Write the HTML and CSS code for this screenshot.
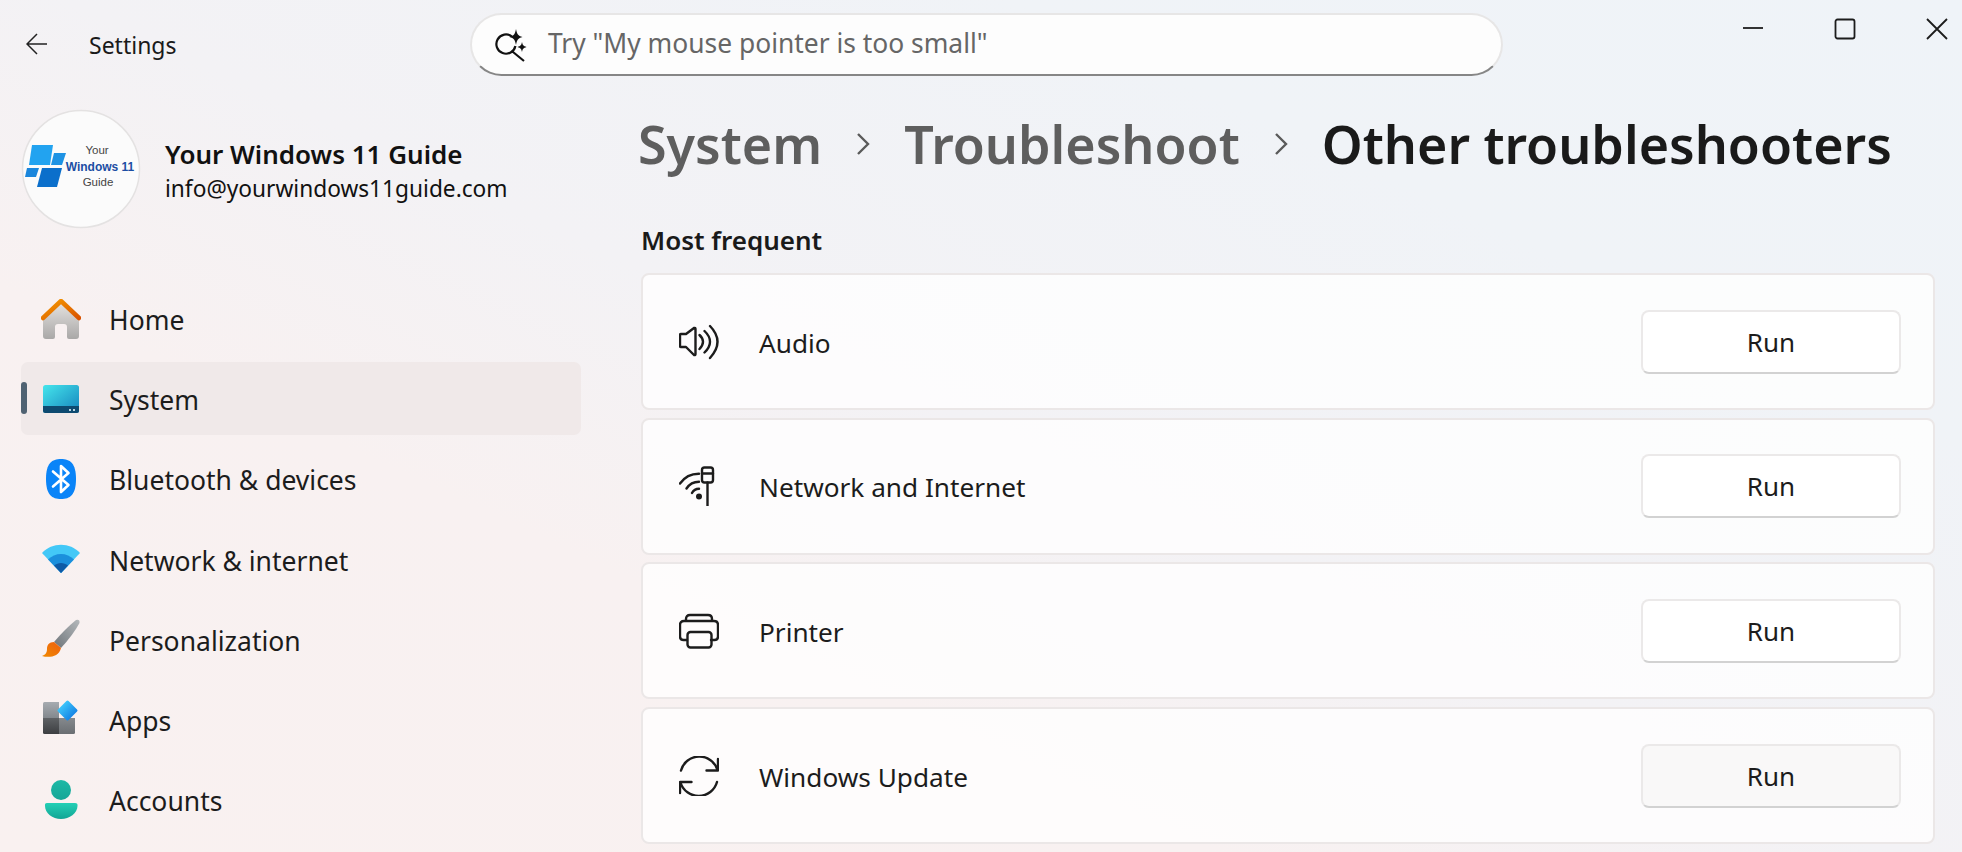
FILE: index.html
```html
<!DOCTYPE html>
<html lang="en">
<head>
<meta charset="utf-8">
<title>Settings</title>
<link rel="stylesheet" href="styles.css">
</head>
<body>
<div class="app">
  <header class="titlebar">
    <svg class="back" viewBox="0 0 22 22"><path d="M21 11H1M11 1 1 11l10 10"/></svg>
    <span class="app-title">Settings</span>
    <div class="search">
      <svg class="search-icon" viewBox="0 0 34 34">
        <path class="ln" d="M19 8.600A9.600 9.600 0 1 0 22.400 18M20 24l11 9"/>
        <path class="st" d="M23 1c1 5 2 7 6.500 8-4.500 1-5.500 3-6.500 8-1-5-2-7-6.500-8 4.500-1 5.500-3 6.500-8zM29 14c.7 3 1.300 4 4.500 5-3.200 1-3.800 2-4.500 5-.7-3-1.300-4-4.500-5 3.200-1 3.800-2 4.500-5z"/>
      </svg>
      <span class="search-text">Try "My mouse pointer is too small"</span>
    </div>
    <div class="controls">
      <svg class="ctl" viewBox="0 0 22 22"><path d="M1 10h20"/></svg>
      <svg class="ctl" viewBox="0 0 22 22"><rect x="1.500" y="1.500" width="19" height="19" rx="2"/></svg>
      <svg class="ctl" viewBox="0 0 22 22"><path d="M1 1l20 20M21 1 1 21"/></svg>
    </div>
  </header>
  <div class="content">
    <aside class="sidebar">
      <div class="profile">
        <svg class="avatar" viewBox="21 109 120 120">
          <circle cx="81" cy="169" r="58.500" fill="#fbfbfb" stroke="#e4e2e2" stroke-width="1.500"/>
          <polygon fill="#22a3f0" points="32,145 53,145 50,165 29,165"/>
          <polygon fill="#1e93e4" points="54,153 66,153 62,165 51,165"/>
          <polygon fill="#1a86dc" points="27,168 39,168 36,177 25,177"/>
          <polygon fill="#0b6fcb" points="42,168 62,168 57,187 37,187"/>
          <text class="av-text" x="97" y="154" text-anchor="middle">Your</text>
          <text class="av-brand" x="100" y="171" text-anchor="middle">Windows 11</text>
          <text class="av-text" x="98" y="186" text-anchor="middle">Guide</text>
        </svg>
        <div class="who">
          <div class="who-name">Your Windows 11 Guide</div>
          <div class="who-mail">info@yourwindows11guide.com</div>
        </div>
      </div>
      <nav class="nav">
        <a class="nav-item">
          <svg class="nav-icon" viewBox="0 0 40 40">
            <defs>
              <linearGradient id="hb" x1="0" y1="0" x2="0" y2="1"><stop offset="0" stop-color="#e6e3e1"/><stop offset="1" stop-color="#a9a8a7"/></linearGradient>
              <linearGradient id="hr" x1="0" y1="0" x2="1" y2="1"><stop offset="0" stop-color="#f59a00"/><stop offset="1" stop-color="#d95300"/></linearGradient>
            </defs>
            <path fill="url(#hb)" d="M20 3 38 20V37q0 3-3 3H28a2 2 0 0 1-2-2V28q0-3-3-3H17q-3 0-3 3V38a2 2 0 0 1-2 2H5q-3 0-3-3V20z"/>
            <path fill="none" stroke="url(#hr)" stroke-width="4.500" stroke-linecap="round" stroke-linejoin="round" d="M2 19 20 2 38 19"/>
          </svg>
          <span>Home</span>
        </a>
        <a class="nav-item is-active">
          <svg class="nav-icon" viewBox="0 0 40 40">
            <defs><linearGradient id="sy" x1="0" y1="0" x2="1" y2="1"><stop offset="0" stop-color="#45e6ec"/><stop offset="1" stop-color="#1583bd"/></linearGradient></defs>
            <rect x="2" y="6" width="36" height="28" rx="2.500" fill="url(#sy)"/>
            <path fill="#0d4a70" d="M2 27h36v4.500q0 2.500-2.500 2.500h-31Q2 34 2 31.500z"/>
            <rect x="28" y="30" width="2" height="2" fill="#b8d4e2"/><rect x="32" y="30" width="2" height="2" fill="#b8d4e2"/>
          </svg>
          <span>System</span>
        </a>
        <a class="nav-item">
          <svg class="nav-icon" viewBox="0 0 40 40">
            <path fill="#0a84f8" d="M20 0C29 0 35 4 35 20S29 40 20 40 5 36 5 20 11 0 20 0z"/>
            <path fill="none" stroke="#fff" stroke-width="2.600" stroke-linecap="round" stroke-linejoin="round" d="M12 12.500 27.500 26 20 33V7l7.500 7L12 27.500"/>
          </svg>
          <span>Bluetooth &amp; devices</span>
        </a>
        <a class="nav-item">
          <svg class="nav-icon" viewBox="0 0 40 40">
            <path fill="#43c8f7" d="M1 14C11 3 29 3 39 14L20 34z"/>
            <path fill="#1b8fdc" d="M7 20.500C14 13 26 13 33 20.500L20 34z"/>
            <path fill="#0e5aa6" d="M13 26.500C17 23 23 23 27 26.500L20 34z"/>
          </svg>
          <span>Network &amp; internet</span>
        </a>
        <a class="nav-item">
          <svg class="nav-icon" viewBox="0 0 40 40">
            <defs>
              <linearGradient id="bh" x1="0" y1="1" x2="1" y2="0"><stop offset="0" stop-color="#6e7479"/><stop offset="1" stop-color="#b4b8bb"/></linearGradient>
              <linearGradient id="bo" x1="0" y1="1" x2="1" y2="0"><stop offset="0" stop-color="#f08a00"/><stop offset="1" stop-color="#ee5f10"/></linearGradient>
            </defs>
            <path fill="url(#bh)" d="M35 1q4-1 3.500 3Q32 16 20 29l-7-6Q24 10 35 1z"/>
            <path fill="url(#bo)" d="M13 23c-5 0-7 3-7 7 0 4-2 6-5 7 7 2 17 1 19-8z"/>
          </svg>
          <span>Personalization</span>
        </a>
        <a class="nav-item">
          <svg class="nav-icon" viewBox="0 0 40 40">
            <defs>
              <linearGradient id="a1" x1="0" y1="0" x2="0" y2="1"><stop offset="0" stop-color="#a6abb0"/><stop offset="1" stop-color="#83888d"/></linearGradient>
              <linearGradient id="a2" x1="0" y1="0" x2="0" y2="1"><stop offset="0" stop-color="#5f6265"/><stop offset="1" stop-color="#3c3e41"/></linearGradient>
              <linearGradient id="a3" x1="0" y1="0" x2="0" y2="1"><stop offset="0" stop-color="#85898d"/><stop offset="1" stop-color="#6a6e72"/></linearGradient>
              <linearGradient id="a4" x1="0" y1="0" x2="1" y2="0"><stop offset="0" stop-color="#3cc4fa"/><stop offset="1" stop-color="#1786e6"/></linearGradient>
            </defs>
            <path fill="url(#a1)" d="M3.500 3H18v16H2V4.500Q2 3 3.500 3z"/>
            <path fill="url(#a2)" d="M2 19h16v16H3.500Q2 35 2 33.500z"/>
            <path fill="url(#a3)" d="M18 19h16v14.500q0 1.500-1.500 1.500H18z"/>
            <rect x="19" y="4" width="15" height="15" rx="1.500" transform="rotate(45 26.500 11.500)" fill="url(#a4)"/>
          </svg>
          <span>Apps</span>
        </a>
        <a class="nav-item">
          <svg class="nav-icon" viewBox="0 0 40 40">
            <defs>
              <linearGradient id="u1" x1="0" y1="0" x2="0" y2="1"><stop offset="0" stop-color="#1db9a6"/><stop offset="1" stop-color="#16a697"/></linearGradient>
              <linearGradient id="u2" x1="0" y1="0" x2="0" y2="1"><stop offset="0" stop-color="#24d0b6"/><stop offset="1" stop-color="#12a594"/></linearGradient>
            </defs>
            <circle cx="20" cy="10" r="10" fill="url(#u1)"/>
            <path fill="url(#u2)" d="M6 23h28q3 0 2.500 3c0 7-8 13-16.500 13S4 33 4 26q-.5-3 2-3z"/>
          </svg>
          <span>Accounts</span>
        </a>
      </nav>
    </aside>
    <main class="main">
      <h1 class="crumbs">
        <span class="crumb">System</span>
        <svg class="chev" viewBox="0 0 14 24"><path d="M2 2l10 10L2 22"/></svg>
        <span class="crumb">Troubleshoot</span>
        <svg class="chev" viewBox="0 0 14 24"><path d="M2 2l10 10L2 22"/></svg>
        <span class="crumb-now">Other troubleshooters</span>
      </h1>
      <h2 class="section">Most frequent</h2>
      <section class="list">
        <div class="row">
          <svg class="row-icon" viewBox="0 0 40 40"><path d="M2 12H7L15 6Q16.500 5.500 16.500 7V32Q16.500 33.500 15 33L7 25H2Q1 25 1 24V13Q1 12 2 12zM20.500 13Q27.500 19.500 20.500 27M25.500 9Q36.500 19.500 25.500 30.500M31 4Q46 19.500 31 36"/></svg>
          <span class="row-label">Audio</span>
          <button class="run">Run</button>
        </div>
        <div class="row">
          <svg class="row-icon" viewBox="0 0 40 40"><path d="M1 17.500A23 23 0 0 1 20 7.700M7.500 22.500A15 15 0 0 1 20 15.700M13 27A8 8 0 0 1 20 22.700"/><circle class="dot" cx="20" cy="30.500" r="3"/><rect x="23" y="1.500" width="11" height="15" rx="2.500"/><path d="M23 7.500h11M28.500 16.500V40"/></svg>
          <span class="row-label">Network and Internet</span>
          <button class="run">Run</button>
        </div>
        <div class="row">
          <svg class="row-icon" viewBox="0 0 40 40"><path d="M8 29H4.500Q1 29 1 25.500V14Q1 10 5 10H35Q39 10 39 14V25.500Q39 29 35.500 29H32M7 10V8Q7 4 11 4H29Q33 4 33 8V10"/><rect x="8.500" y="21" width="24" height="15.500" rx="3"/></svg>
          <span class="row-label">Printer</span>
          <button class="run">Run</button>
        </div>
        <div class="row">
          <svg class="row-icon" viewBox="0 0 40 40"><path d="M2 14.500A19 19 0 0 1 38.500 14M39 3V14.500H27.500M38 26A19 19 0 0 1 1.500 26.500M1 37V26H12.500"/></svg>
          <span class="row-label">Windows Update</span>
          <button class="run is-hover">Run</button>
        </div>
      </section>
    </main>
  </div>
</div>
</body>
</html>
```
FILE: styles.css
```css
* { box-sizing: border-box; }
html, body { margin: 0; height: 100%; overflow: hidden; }
body {
  font-family: "Noto Sans", "Open Sans", sans-serif;
  color: #1a1a1a;
  background: linear-gradient(205deg, #eff3f8 0%, #f0f3f7 25%, #f3f2f5 50%, #f8f1f1 68%, #f9f1f0 100%);
}
.app { width: 1962px; height: 852px; display: flex; flex-direction: column; }

.titlebar { height: 88px; display: flex; align-items: flex-start; position: relative; flex: none; }
.back { width: 22px; height: 22px; margin: 33px 0 0 26px; fill: none; stroke: #222; stroke-width: 1.500; flex: none; }
.app-title { font-size: 23px; margin: 27px 0 0 41px; line-height: 36px; width: 381px; flex: none; }
.search {
  width: 1033px; height: 63px; margin-top: 13px; flex: none;
  border: 2px solid #e7e6e6; border-bottom: 2px solid #868686; border-radius: 32px;
  background: #fdfdfd; display: flex; align-items: center; padding-left: 21px; gap: 21px;
}
.search-icon { width: 34px; height: 34px; flex: none; }
.search-icon .ln { fill: none; stroke: #111; stroke-width: 2.200; }
.search-icon .st { fill: #111; }
.search-text { font-size: 26.400px; color: #666; margin-top: -3px; }
.controls { position: absolute; top: 18px; right: 14px; display: flex; gap: 70px; }
.ctl { width: 22px; height: 22px; fill: none; stroke: #1c1c1c; stroke-width: 1.800; }

.content { flex: 1; display: flex; min-height: 0; }
.sidebar { width: 641px; flex: none; padding: 21px 60px 0 21px; }
.profile { display: flex; align-items: center; height: 120px; }
.avatar { width: 120px; height: 120px; flex: none; }
.av-text { font: 11.500px "Liberation Sans", sans-serif; fill: #444; }
.av-brand { font: bold 12px "Liberation Sans", sans-serif; fill: #1c4ea3; }
.who { margin-left: 24px; padding-top: 4px; }
.who-name { font-size: 26px; font-weight: 600; color: #111; line-height: 36px; }
.who-mail { font-size: 22.700px; color: #111; line-height: 34px; }

.nav { margin-top: 53px; display: flex; flex-direction: column; gap: 7.200px; }
.nav-item { height: 73px; display: flex; align-items: center; padding-left: 20px; gap: 28px; font-size: 26.500px; border-radius: 7px; position: relative; color: #1c1c1c; }
.nav-item span { padding-top: 3px; }
.nav-icon { width: 40px; height: 40px; flex: none; }
.is-active { background: #f0e9e9; }
.is-active::before { content: ""; position: absolute; left: 0; top: 20px; width: 6px; height: 32px; border-radius: 3px; background: #4f6272; }

.main { flex: 1; min-width: 0; padding: 27px 27px 0 0; }
.crumbs { margin: 0 0 0 -3px; height: 58px; display: flex; align-items: center; font-weight: 600; font-size: 52px; line-height: 58px; white-space: nowrap; }
.crumb { color: #5e5e5e; }
.crumb-now { color: #1a1a1a; }
.chev { width: 14px; height: 24px; fill: none; stroke: #5a5a5a; stroke-width: 2.400; margin: 0 34px; flex: none; }
.section { margin: 49px 0 0; height: 36px; font-size: 26px; font-weight: 600; line-height: 36px; color: #1a1a1a; }
.list { margin-top: 15px; display: flex; flex-direction: column; gap: 7.700px; }
.row {
  height: 137px; display: flex; align-items: center; padding: 0 32px 0 36px;
  background: rgba(255, 255, 255, .78); border: 2px solid #ebe7e7; border-radius: 8px;
}
.row-icon { width: 40px; height: 40px; flex: none; fill: none; stroke: #1c1c1c; stroke-width: 2.400; stroke-linecap: round; stroke-linejoin: round; }
.row-icon .dot { fill: #1c1c1c; stroke: none; }
.row-label { margin-left: 40px; padding-top: 2px; font-size: 26.200px; flex: 1; color: #1c1c1c; }
.run {
  width: 260px; height: 64px; font: 26px "Noto Sans", "Open Sans", sans-serif; color: #1c1c1c;
  background: #fff; border: 2px solid #ebe9e9; border-bottom-color: #d2d2d2; border-radius: 8px; padding: 0;
}
.is-hover { background: #f9f8f8; }
```
